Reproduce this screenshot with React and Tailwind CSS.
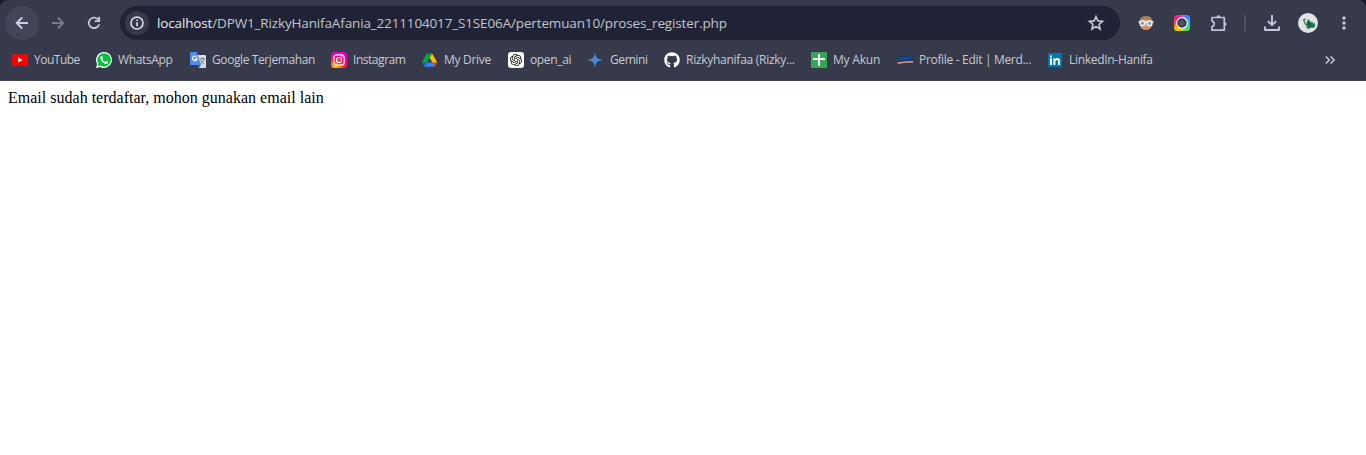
import { MdMoreVert } from "react-icons/md";
import { FaGithub } from "react-icons/fa";
import { SiOpenai } from "react-icons/si";

const Line = ({ d, className, width = 1.8 }) => (
  <svg viewBox="0 0 18 18" className={`size-[18px] shrink-0 ${className}`}>
    <path d={d} fill="none" stroke="currentColor" strokeWidth={width} />
  </svg>
);

const YouTube = () => (
  <svg viewBox="0 0 16 16" className="size-4">
    <rect x="0" y="2.3" width="16" height="11.5" rx="2.6" fill="#f00" />
    <path d="M6.2 5.6 10.6 8 6.2 10.4Z" fill="#fff" />
  </svg>
);

const WhatsApp = () => (
  <svg viewBox="0 0 16 16" className="size-4">
    <path d="M8 0a8 8 0 0 0-6.9 12L0 16l4.1-1A8 8 0 1 0 8 0Z" fill="#fff" />
    <path d="M8.1 1.2a6.7 6.7 0 0 0-5.7 10.3l-.8 2.8 2.9-.8A6.7 6.7 0 1 0 8.1 1.2Z" fill="#08c13b" />
    <path d="M5.600 4.100c-.5 0-1.300.8-1.200 1.900.2 2.500 3.200 5.500 5.700 5.900 1 .1 2-.6 2-1.400 0-.5 0-.6-.4-.8l-1.400-.6c-.5-.2-.8.900-1.200.800-1-.3-2.200-1.500-2.600-2.400-.1-.3.700-.8.500-1.300l-.6-1.500c-.2-.5-.4-.6-.8-.6Z" fill="#fff" />
  </svg>
);

const Translate = () => (
  <svg viewBox="0 0 16 16" className="size-4">
    <path d="M6 3h9a1 1 0 0 1 1 1v11a1 1 0 0 1-1 1H9Z" fill="#dcdcdc" />
    <path d="M9.500 6.700h5.500M12.200 5.500v1.200M14 6.800c-.5 2.600-2 4.200-4 5.200M10.700 8c.8 2 2.200 3.300 3.800 4" fill="none" stroke="#687883" strokeWidth="1" />
    <path d="m8 13 3 0-2.200 3Z" fill="#3156be" />
    <path d="M1 0h5.700l4.300 13H1a1 1 0 0 1-1-1V1a1 1 0 0 1 1-1Z" fill="#4c8bf5" />
    <path d="M6.700 4.900A2.300 2.300 0 1 0 7.100 6.900H5" fill="none" stroke="#fff" strokeWidth="1.200" />
  </svg>
);

const Instagram = () => (
  <svg viewBox="0 0 16 16" className="size-4">
    <defs>
      <radialGradient id="ig-warm" cx=".25" cy="1.05" r="1.05">
        <stop offset="0" stopColor="#ffd600" />
        <stop offset=".25" stopColor="#ff9800" />
        <stop offset=".5" stopColor="#ff2d30" />
        <stop offset=".75" stopColor="#ff0178" />
        <stop offset="1" stopColor="#e300c5" />
      </radialGradient>
    </defs>
    <rect width="16" height="16" rx="3.500" fill="url(#ig-warm)" />
    <rect x="2.800" y="2.800" width="10.400" height="10.400" rx="3" fill="none" stroke="#fff" strokeWidth="1.200" />
    <circle cx="8" cy="8" r="2.500" fill="none" stroke="#fff" strokeWidth="1.200" />
    <circle cx="11" cy="5" r=".7" fill="#fff" />
  </svg>
);

const Drive = () => (
  <svg viewBox="0 0 87.300 78" className="mr-px h-[14px] w-[15px]">
    <path d="m6.600 66.850 3.850 6.650c.8 1.400 1.950 2.500 3.300 3.300L27.500 53H0c0 1.550.4 3.100 1.200 4.500z" fill="#0066da" />
    <path d="M43.650 25 29.900 1.200c-1.350.8-2.500 1.900-3.300 3.300L1.200 48.500A9 9 0 0 0 0 53h27.500z" fill="#00ac47" />
    <path d="M73.550 76.800c1.350-.8 2.500-1.900 3.300-3.300l1.600-2.750L86.100 57.500c.8-1.400 1.200-2.950 1.200-4.500H59.800l5.850 11.500z" fill="#ea4335" />
    <path d="M43.650 25 57.400 1.200C56.050.4 54.500 0 52.900 0H34.400c-1.600 0-3.150.45-4.500 1.200z" fill="#168f3d" />
    <path d="M59.800 53H27.500L13.750 76.800c1.350.8 2.900 1.200 4.500 1.200h50.800c1.600 0 3.150-.45 4.500-1.200z" fill="#3680f5" />
    <path d="M73.400 26.500 60.700 4.500c-.8-1.400-1.950-2.500-3.300-3.300L43.650 25 59.800 53h27.450c0-1.550-.4-3.100-1.200-4.500z" fill="#ffba00" />
  </svg>
);

const OpenAi = () => (
  <span className="flex size-4 items-center justify-center rounded-[3px] bg-white text-[#111]">
    <SiOpenai className="size-3" />
  </span>
);

const Gemini = () => (
  <svg viewBox="0 0 16 16" className="size-4">
    <defs>
      <linearGradient id="gem" x1="0" y1="0" x2="1" y2="0">
        <stop offset=".1" stopColor="#8d78c4" />
        <stop offset=".45" stopColor="#4c86dc" />
        <stop offset="1" stopColor="#38a0e0" />
      </linearGradient>
    </defs>
    <path d="M7 1.500c.5 3.700 2.400 6 6.600 6.500C9.400 8.500 7.500 10.800 7 14.500 6.500 10.800 4.600 8.500.4 8 4.600 7.500 6.500 5.200 7 1.500Z" fill="url(#gem)" stroke="url(#gem)" strokeWidth=".5" />
  </svg>
);

const Sheets = () => (
  <svg viewBox="0 0 16 16" className="size-4">
    <rect width="16" height="16" rx="1" fill="#34a853" />
    <path d="M7 2h2v4h5v2H9v6H7V8H2V6h5Z" fill="#fff" />
  </svg>
);

const Merdeka = () => (
  <svg viewBox="0 0 16 16" className="size-4">
    <path d="M1 4.200 15.500 4v4.800L0 10Z" fill="#143b78" />
    <path d="m2 5.700 2 1 2-1.500 2 1.500 2-1.400 2 1 3-1.300M2 8l3-.5 3 .3 3-1" stroke="#2d5b9f" strokeWidth=".6" fill="none" />
    <path d="M0 10.600c4-.6 10-1.600 16-1.500v1.700c-6-.2-10.500.2-15 1.200Z" fill="#e5976e" />
  </svg>
);

const LinkedIn = () => (
  <svg viewBox="0 0 14 14" className="mx-px size-[14px]">
    <rect width="14" height="14" fill="#0077b5" />
    <path d="M2 5.300h2V12H2ZM2 2.400h2v1.800H2ZM5.400 5.300h1.900v.9c.5-.7 1.200-1.100 2.100-1.100C11.400 5.100 12 6.300 12 8.200V12h-2V8.700c0-1.100-.3-1.800-1.200-1.800S7.400 7.700 7.400 8.700V12h-2Z" fill="#fff" />
  </svg>
);

const GitHub = () => <FaGithub className="size-4 text-white" />;

const bookmarks = [
  { label: "YouTube", Icon: YouTube, box: "w-[84px]", text: "tracking-[-0.5px]" },
  { label: "WhatsApp", Icon: WhatsApp, box: "w-[94px]", text: "tracking-[-0.35px]" },
  { label: "Google Terjemahan", Icon: Translate, box: "w-[141px]", text: "tracking-[-0.4px]" },
  { label: "Instagram", Icon: Instagram, box: "w-[91px]", text: "tracking-[-0.46px]" },
  { label: "My Drive", Icon: Drive, box: "w-[86px]", text: "tracking-[-0.3px]" },
  { label: "open_ai", Icon: OpenAi, box: "w-[80px]", text: "tracking-[-0.35px]" },
  { label: "Gemini", Icon: Gemini, box: "w-[76px]", text: "tracking-[-0.4px]" },
  { label: "Rizkyhanifaa (Rizky...", Icon: GitHub, box: "w-[147px]", text: "tracking-[-0.27px]" },
  { label: "My Akun", Icon: Sheets, box: "w-[86px]", text: "tracking-[-0.2px]" },
  { label: "Profile - Edit | Merd...", Icon: Merdeka, box: "w-[150px]", text: "tracking-[-0.32px]" },
  { label: "LinkedIn-Hanifa", Icon: LinkedIn, box: "w-[110px]", text: "tracking-[-0.3px]" },
];

const Avatar = () => (
  <svg viewBox="0 0 16 16" className="size-4">
    <circle cx="8" cy="8.300" r="6.700" fill="#df9870" />
    <path d="M1.200 7C1.200 2.800 4 .9 8 .9S14.800 2.800 14.800 7L12 4.800 4 4.600Z" fill="#9c8058" />
    <path d="M.4 7h15.200" stroke="#eef7fa" strokeWidth="1.300" />
    <circle cx="4.400" cy="8.200" r="2.300" fill="#63a9c6" stroke="#f3fafb" strokeWidth="1.200" />
    <circle cx="11.600" cy="8.200" r="2.300" fill="#63a9c6" stroke="#f3fafb" strokeWidth="1.200" />
    <path d="M6 13h4" stroke="#b86c53" strokeWidth=".8" />
  </svg>
);

const Camera = () => (
  <span className="flex size-4 items-center justify-center rounded-[3px] bg-[conic-gradient(from_0deg,#c65cff,#348cff_12%,#20c6ed_25%,#42d96b_38%,#b9dc25_50%,#ffc400_62%,#ff6a20_72%,#ff1675_85%,#f32ccc)]">
    <svg viewBox="0 0 12 12" className="size-3">
      <circle cx="6" cy="6" r="5.300" fill="#303b48" stroke="#fff" strokeWidth="1.200" />
      <circle cx="6" cy="6" r="3" fill="#4d575f" stroke="#3a454e" strokeWidth=".8" />
    </svg>
  </span>
);

const Puzzle = () => (
  <svg viewBox="0 0 18 18" className="h-[18px] w-[18px]">
    <path d="M2 3.500h12.300v12.700H2v-3.600c2.900-.6 2.900-4.900 0-5.500Z" fill="none" stroke="#bfc3dc" strokeWidth="1.700" strokeLinejoin="round" />
    <path d="M6.600 3.200a1.900 1.900 0 0 1 3.800 0ZM14.600 8a1.900 1.900 0 0 1 0 3.800Z" fill="#bfc3dc" />
  </svg>
);

const Profile = () => (
  <svg viewBox="0 0 20 20" className="size-5">
    <circle cx="10" cy="10" r="10" fill="#e3e4e2" />
    <path d="M5 6.200 7.300 5.500 8 6.300 6.600 7.200 7 9.500 9 11 8.500 9 10 7 9.500 5.800 11.500 7 12 9.500 13 8 14 10 15 8.500 15.500 11 16.800 9.500 17.300 13.500 15.500 15 13 14.500 11.500 15.700 9 15.500 8 14 9.300 13.500 7 11.500 5.700 9Z" fill="#28795a" />
    <path d="m10 8 1 4 1-2 2 4M9 12l3 1" fill="none" stroke="#114c3b" strokeWidth=".8" />
  </svg>
);

export default function App() {
  return (
    <div className="h-[455px] w-[1366px] overflow-hidden bg-white">
      <div className="bg-[#171a28]">
        <header className="h-[81px] rounded-t-[8px] border-b border-[#40424e] bg-[#363a4b] pt-[6px] font-['Open_Sans','Noto_Sans',sans-serif]">
          <div className="flex h-[34px] items-center">
            <div className="ml-[5px] flex size-[34px] items-center justify-center rounded-full bg-[#414557] text-[#cdd0e4]">
              <Line d="M15 9H4M9.200 3.500 3.700 9l5.500 5.500" />
            </div>
            <Line className="ml-[10px] text-[#777b8d]" d="M3 9h11M8.800 3.500l5.500 5.500-5.500 5.500" />
            <Line className="ml-[18px] text-[#c5c8dc]" d="M14.200 10.200A5.300 5.300 0 1 1 13 5.300L14.200 6.700M14.200 2.800v4.400H9.800" />
            <div className="ml-[17px] flex h-[34px] w-[1000px] items-center rounded-full bg-[#1f2335] pr-[15px] pl-[5px]">
              <span className="flex size-6 items-center justify-center rounded-full bg-[#363a4b]">
                <svg viewBox="0 0 16 16" className="size-4 text-[#e0e1e8]">
                  <circle cx="8" cy="8" r="6" fill="none" stroke="currentColor" strokeWidth="1.600" />
                  <path d="M8 7.300v4M8 4.500v1.600" stroke="currentColor" strokeWidth="1.600" />
                </svg>
              </span>
              <span className="ml-2 text-[13.5px] leading-5 whitespace-nowrap tracking-[-0.145px] text-[#c2c4ca]">
                <span className="text-[#e9eaed]">localhost</span>/DPW1_RizkyHanifaAfania_2211104017_S1SE06A/pertemuan10/proses_register.php
              </span>
              <Line width={1.6} className="ml-auto text-[#c6c7cc]" d="m9 2.600 1.900 4.300 4.700.4L12 10.400l1.100 4.600L9 12.500 4.900 15 6 10.400 2.400 7.300l4.700-.4Z" />
            </div>
            <div className="ml-[18px] flex items-center">
              <Avatar />
              <span className="ml-5"><Camera /></span>
              <span className="ml-5"><Puzzle /></span>
              <span className="ml-4 h-4 w-[2px] bg-[#4f5366]" />
              <svg viewBox="0 0 16 16" className="ml-[18px] size-4">
                <path d="M8 0v10M3.900 6.100 8 10.200l4.100-4.100M1 11.500V15h14v-3.500" fill="none" stroke="#c5c8de" strokeWidth="1.900" strokeLinejoin="round" />
              </svg>
              <span className="ml-[18px]"><Profile /></span>
              <MdMoreVert className="ml-[16px] size-5 text-[#c5c8de]" />
            </div>
          </div>
          <nav className="flex h-10 items-center pl-3 text-[12px] text-[#c8cad0]">
            {bookmarks.map(({ label, Icon, box, text }) => (
              <a key={label} className={`flex shrink-0 items-center gap-[6px] whitespace-nowrap ${box}`}>
                <Icon />
                <span className={text}>{label}</span>
              </a>
            ))}
            <svg viewBox="0 0 10 8" className="mr-[31px] ml-auto h-2 w-[10px]">
              <path d="m.8.500 3.500 3.500L.8 7.500M5.600.500 9.100 4 5.600 7.500" fill="none" stroke="#c8cad0" strokeWidth="1.500" />
            </svg>
          </nav>
        </header>
      </div>
      <main className="p-2 font-['Liberation_Serif',serif] text-[16px] leading-[18px] tracking-[0.01px] text-black">
        Email sudah terdaftar, mohon gunakan email lain
      </main>
    </div>
  );
}
